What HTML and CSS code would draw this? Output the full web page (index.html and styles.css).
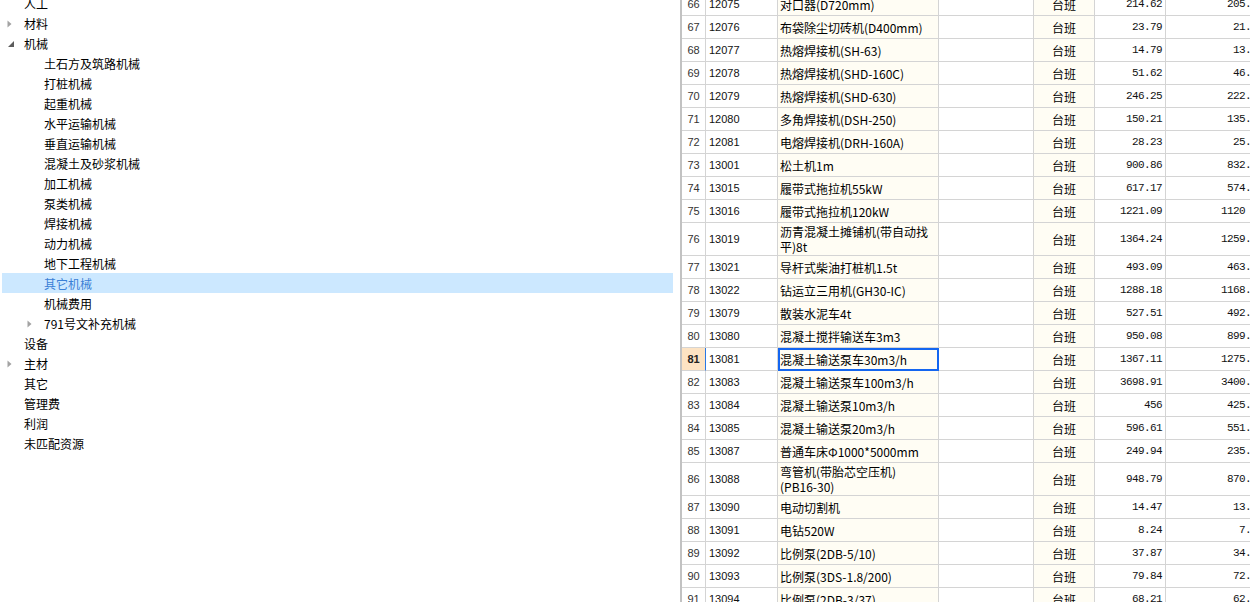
FILE: index.html
```html
<!DOCTYPE html>
<html lang="zh-CN">
<head>
<meta charset="utf-8">
<title>机械台班</title>
<link rel="stylesheet" href="styles.css">
</head>
<body>
<div class="app">
  <aside class="tree">
    <ul class="tree-list">
      <li class="node l1"><span class="tog"></span><span class="lbl">人工</span></li>
      <li class="node l1"><span class="tog"><svg class="arr-c" width="5" height="8" viewBox="0 0 5 8"><path d="M0.5 0.5 L4.5 4 L0.5 7.5Z" fill="#a3a3a3"/></svg></span><span class="lbl">材料</span></li>
      <li class="node l1"><span class="tog"><svg class="arr-e" width="6" height="6" viewBox="0 0 6 6"><path d="M6 0 L6 6 L0 6Z" fill="#5c5c5c"/></svg></span><span class="lbl">机械</span></li>
      <li class="node l2"><span class="tog"></span><span class="lbl">土石方及筑路机械</span></li>
      <li class="node l2"><span class="tog"></span><span class="lbl">打桩机械</span></li>
      <li class="node l2"><span class="tog"></span><span class="lbl">起重机械</span></li>
      <li class="node l2"><span class="tog"></span><span class="lbl">水平运输机械</span></li>
      <li class="node l2"><span class="tog"></span><span class="lbl">垂直运输机械</span></li>
      <li class="node l2"><span class="tog"></span><span class="lbl">混凝土及砂浆机械</span></li>
      <li class="node l2"><span class="tog"></span><span class="lbl">加工机械</span></li>
      <li class="node l2"><span class="tog"></span><span class="lbl">泵类机械</span></li>
      <li class="node l2"><span class="tog"></span><span class="lbl">焊接机械</span></li>
      <li class="node l2"><span class="tog"></span><span class="lbl">动力机械</span></li>
      <li class="node l2"><span class="tog"></span><span class="lbl">地下工程机械</span></li>
      <li class="node l2 sel"><span class="tog"></span><span class="lbl">其它机械</span></li>
      <li class="node l2"><span class="tog"></span><span class="lbl">机械费用</span></li>
      <li class="node l2"><span class="tog"><svg class="arr-c" width="5" height="8" viewBox="0 0 5 8"><path d="M0.5 0.5 L4.5 4 L0.5 7.5Z" fill="#a3a3a3"/></svg></span><span class="lbl">791号文补充机械</span></li>
      <li class="node l1"><span class="tog"></span><span class="lbl">设备</span></li>
      <li class="node l1"><span class="tog"><svg class="arr-c" width="5" height="8" viewBox="0 0 5 8"><path d="M0.5 0.5 L4.5 4 L0.5 7.5Z" fill="#a3a3a3"/></svg></span><span class="lbl">主材</span></li>
      <li class="node l1"><span class="tog"></span><span class="lbl">其它</span></li>
      <li class="node l1"><span class="tog"></span><span class="lbl">管理费</span></li>
      <li class="node l1"><span class="tog"></span><span class="lbl">利润</span></li>
      <li class="node l1"><span class="tog"></span><span class="lbl">未匹配资源</span></li>
    </ul>
  </aside>
  <div class="splitter"></div>
  <section class="grid">
    <div class="rows">
      <div class="row"><div class="c num">66</div><div class="c code">12075</div><div class="c name">对口器(D720mm)</div><div class="c spec"></div><div class="c unit">台班</div><div class="c price">214.62</div><div class="c last">205.48</div></div>
      <div class="row"><div class="c num">67</div><div class="c code">12076</div><div class="c name">布袋除尘切砖机(D400mm)</div><div class="c spec"></div><div class="c unit">台班</div><div class="c price">23.79</div><div class="c last">21.95</div></div>
      <div class="row"><div class="c num">68</div><div class="c code">12077</div><div class="c name">热熔焊接机(SH-63)</div><div class="c spec"></div><div class="c unit">台班</div><div class="c price">14.79</div><div class="c last">13.62</div></div>
      <div class="row"><div class="c num">69</div><div class="c code">12078</div><div class="c name">热熔焊接机(SHD-160C)</div><div class="c spec"></div><div class="c unit">台班</div><div class="c price">51.62</div><div class="c last">46.88</div></div>
      <div class="row"><div class="c num">70</div><div class="c code">12079</div><div class="c name">热熔焊接机(SHD-630)</div><div class="c spec"></div><div class="c unit">台班</div><div class="c price">246.25</div><div class="c last">222.31</div></div>
      <div class="row"><div class="c num">71</div><div class="c code">12080</div><div class="c name">多角焊接机(DSH-250)</div><div class="c spec"></div><div class="c unit">台班</div><div class="c price">150.21</div><div class="c last">135.74</div></div>
      <div class="row"><div class="c num">72</div><div class="c code">12081</div><div class="c name">电熔焊接机(DRH-160A)</div><div class="c spec"></div><div class="c unit">台班</div><div class="c price">28.23</div><div class="c last">25.86</div></div>
      <div class="row"><div class="c num">73</div><div class="c code">13001</div><div class="c name">松土机1m</div><div class="c spec"></div><div class="c unit">台班</div><div class="c price">900.86</div><div class="c last">832.17</div></div>
      <div class="row"><div class="c num">74</div><div class="c code">13015</div><div class="c name">履带式拖拉机55kW</div><div class="c spec"></div><div class="c unit">台班</div><div class="c price">617.17</div><div class="c last">574.39</div></div>
      <div class="row"><div class="c num">75</div><div class="c code">13016</div><div class="c name">履带式拖拉机120kW</div><div class="c spec"></div><div class="c unit">台班</div><div class="c price">1221.09</div><div class="c last">1120 52</div></div>
      <div class="row tall"><div class="c num">76</div><div class="c code">13019</div><div class="c name">沥青混凝土摊铺机(带自动找<br>平)8t</div><div class="c spec"></div><div class="c unit">台班</div><div class="c price">1364.24</div><div class="c last">1259.63</div></div>
      <div class="row"><div class="c num">77</div><div class="c code">13021</div><div class="c name">导杆式柴油打桩机1.5t</div><div class="c spec"></div><div class="c unit">台班</div><div class="c price">493.09</div><div class="c last">463.25</div></div>
      <div class="row"><div class="c num">78</div><div class="c code">13022</div><div class="c name">钻运立三用机(GH30-IC)</div><div class="c spec"></div><div class="c unit">台班</div><div class="c price">1288.18</div><div class="c last">1168.47</div></div>
      <div class="row"><div class="c num">79</div><div class="c code">13079</div><div class="c name">散装水泥车4t</div><div class="c spec"></div><div class="c unit">台班</div><div class="c price">527.51</div><div class="c last">492.36</div></div>
      <div class="row"><div class="c num">80</div><div class="c code">13080</div><div class="c name">混凝土搅拌输送车3m3</div><div class="c spec"></div><div class="c unit">台班</div><div class="c price">950.08</div><div class="c last">899.14</div></div>
      <div class="row cur"><div class="c num">81</div><div class="c code">13081</div><div class="c name">混凝土输送泵车30m3/h</div><div class="c spec"></div><div class="c unit">台班</div><div class="c price">1367.11</div><div class="c last">1275.82</div></div>
      <div class="row"><div class="c num">82</div><div class="c code">13083</div><div class="c name">混凝土输送泵车100m3/h</div><div class="c spec"></div><div class="c unit">台班</div><div class="c price">3698.91</div><div class="c last">3400.57</div></div>
      <div class="row"><div class="c num">83</div><div class="c code">13084</div><div class="c name">混凝土输送泵10m3/h</div><div class="c spec"></div><div class="c unit">台班</div><div class="c price">456</div><div class="c last">425.93</div></div>
      <div class="row"><div class="c num">84</div><div class="c code">13085</div><div class="c name">混凝土输送泵20m3/h</div><div class="c spec"></div><div class="c unit">台班</div><div class="c price">596.61</div><div class="c last">551.28</div></div>
      <div class="row"><div class="c num">85</div><div class="c code">13087</div><div class="c name">普通车床Φ1000*5000mm</div><div class="c spec"></div><div class="c unit">台班</div><div class="c price">249.94</div><div class="c last">235.61</div></div>
      <div class="row tall"><div class="c num">86</div><div class="c code">13088</div><div class="c name">弯管机(带胎芯空压机)<br>(PB16-30)</div><div class="c spec"></div><div class="c unit">台班</div><div class="c price">948.79</div><div class="c last">870.44</div></div>
      <div class="row"><div class="c num">87</div><div class="c code">13090</div><div class="c name">电动切割机</div><div class="c spec"></div><div class="c unit">台班</div><div class="c price">14.47</div><div class="c last">13.29</div></div>
      <div class="row"><div class="c num">88</div><div class="c code">13091</div><div class="c name">电钻520W</div><div class="c spec"></div><div class="c unit">台班</div><div class="c price">8.24</div><div class="c last">7.58</div></div>
      <div class="row"><div class="c num">89</div><div class="c code">13092</div><div class="c name">比例泵(2DB-5/10)</div><div class="c spec"></div><div class="c unit">台班</div><div class="c price">37.87</div><div class="c last">34.92</div></div>
      <div class="row"><div class="c num">90</div><div class="c code">13093</div><div class="c name">比例泵(3DS-1.8/200)</div><div class="c spec"></div><div class="c unit">台班</div><div class="c price">79.84</div><div class="c last">72.66</div></div>
      <div class="row"><div class="c num">91</div><div class="c code">13094</div><div class="c name">比例泵(2DB-3/37)</div><div class="c spec"></div><div class="c unit">台班</div><div class="c price">68.21</div><div class="c last">62.74</div></div>
    </div>
  </section>
</div>
</body>
</html>
```

FILE: styles.css
```css
* { box-sizing: border-box; }

html, body {
  margin: 0;
  padding: 0;
}

body {
  width: 1250px;
  height: 602px;
  overflow: hidden;
  background: #ffffff;
  color: #000000;
  font-family: "Noto Sans CJK SC", "Noto Sans", sans-serif;
  font-size: 12px;
}

.app {
  display: flex;
  height: 602px;
}

/* ---------- left tree ---------- */
.tree {
  width: 680px;
  flex: none;
  padding: 0 7px 0 2px;
  overflow: hidden;
}

.tree-list {
  list-style: none;
  margin: -7px 0 0;
  padding: 0;
}

.node {
  display: flex;
  align-items: center;
  height: 20px;
  line-height: 20px;
  white-space: nowrap;
  color: #000;
}

.node .lbl { padding-top: 1px; }

.node.l2 { padding-left: 20px; }

.tog {
  width: 22px;
  height: 20px;
  flex: none;
  display: flex;
  align-items: center;
}

.tog .arr-c { margin-left: 5px; margin-top: 1px; }
.tog .arr-e { margin-left: 6px; margin-top: 1px; }

.node.sel {
  background: #cce8ff;
  color: #3a7fd6;
}

/* ---------- splitter ---------- */
.splitter {
  width: 2px;
  flex: none;
  background: #c2c2c2;
}

/* ---------- grid ---------- */
.grid {
  flex: 1;
  min-width: 0;
  overflow: hidden;
}

.rows {
  margin-top: -7px;
  width: 583px;
}

.row {
  display: grid;
  grid-template-columns: 24px 72px 161px 95px 61px 71px 99px;
  height: 23px;
}

.row.tall { height: 33px; }

.c {
  display: flex;
  align-items: center;
  border-right: 1px solid #d4d4d4;
  border-bottom: 1px solid #d4d4d4;
  overflow: hidden;
  white-space: nowrap;
  background: #ffffff;
}

.num {
  justify-content: center;
  font-family: "Liberation Sans", Arial, sans-serif;
  font-size: 11px;
  color: #333333;
}

.code {
  padding-left: 3px;
  font-family: "Liberation Sans", Arial, sans-serif;
  font-size: 11px;
  color: #111111;
}

.name {
  padding-left: 2px;
  background: #fffdf4;
  line-height: 15px;
}

.unit {
  justify-content: center;
  background: #fffdf4;
}

.price,
.last {
  justify-content: flex-end;
  padding-right: 3px;
  font-family: "Liberation Mono", "DejaVu Sans Mono", monospace;
  font-size: 11px;
  letter-spacing: -0.6px;
  color: #111111;
}

.last { padding-right: 1px; }

.row.cur .num {
  background: #fde3c3;
  font-weight: bold;
  color: #222222;
  border-right-color: #2a78e4;
}

.row.cur .name {
  outline: 2px solid #1466f0;
  outline-offset: -2px;
}
```
